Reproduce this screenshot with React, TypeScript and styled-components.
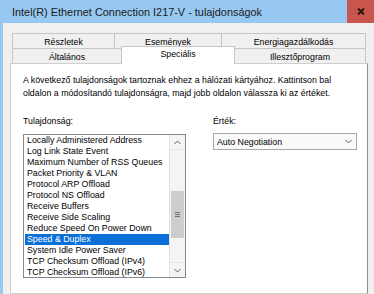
import styled, { createGlobalStyle } from 'styled-components'

const GlobalStyle = createGlobalStyle`
  html, body {
    margin: 0;
    padding: 0;
    background: #f0f0f0;
    overflow: hidden;
  }
  body {
    font-family: "Liberation Sans", Arial, sans-serif;
    color: #000;
  }
`

const Window = styled.div`
  width: 374px;
  height: 294px;
  display: flex;
  flex-direction: column;
  overflow: hidden;
`

const TitleBar = styled.header`
  height: 23px;
  flex: none;
  display: flex;
  align-items: center;
  justify-content: space-between;
  background: #97c8f1;
`

const Title = styled.h1`
  margin: 1px 0 0 12px;
  font-size: 10.9px;
  font-weight: 400;
  color: #1b1b1b;
`

const CloseButton = styled.div`
  width: 27px;
  height: 23px;
  background: #c9564c;
  display: flex;
  align-items: center;
  justify-content: center;
`

const Body = styled.div`
  flex: 1;
  display: flex;
  flex-direction: column;
  border-left: 3px solid #97c8f1;
  padding: 10px 6px 0 7px;
`

const TabStrip = styled.div`
  display: flex;
  flex-direction: column;
  margin: 0 2px;
`

const TabRow = styled.div`
  display: flex;
  height: 15px;
`

const Tab = styled.div<{ $w: number; $active?: boolean; $first?: boolean }>`
  width: ${p => p.$w}px;
  box-sizing: border-box;
  flex: none;
  border-top: 1px solid #c6c6c6;
  border-right: 1px solid #c6c6c6;
  border-left: ${p => (p.$first ? '1px solid #c6c6c6' : 'none')};
  background: #f0f0f0;
  font-size: 8.8px;
  line-height: 13px;
  text-align: center;
  padding-top: 2px;

  ${p =>
    p.$active &&
    `
    position: relative;
    z-index: 1;
    background: #fff;
    height: 18px;
    margin: -2px 0 0 -1px;
    border-left: 1px solid #c6c6c6;
    width: ${p.$w + 1}px;
    padding-top: 1px;
  `}
`

const Panel = styled.section`
  flex: 1;
  background: #fff;
  border: 1px solid #cfcfcf;
  border-right-color: #8f8f8f;
  padding: 10px 10px 0 12px;
`

const Description = styled.p`
  margin: 0 0 15px;
  font-size: 8.8px;
  line-height: 13px;
  white-space: nowrap;
`

const Columns = styled.div`
  display: grid;
  grid-template-columns: 163px 144px;
  column-gap: 27px;
  align-items: start;
`

const Field = styled.div`
  display: flex;
  flex-direction: column;
`

const Label = styled.label`
  font-size: 8.8px;
  line-height: 13px;
  margin-bottom: ${p => (p.htmlFor === 'value' ? 5 : 6)}px;
`

const ListBox = styled.div`
  height: 144px;
  box-sizing: border-box;
  border: 1px solid #828790;
  background: #fff;
  display: flex;
  overflow: hidden;
`

const Items = styled.ul`
  flex: 1;
  margin: 0;
  padding: 0 0 0 1px;
  list-style: none;
  min-width: 0;
`

const Item = styled.li<{ $selected?: boolean }>`
  height: 11px;
  line-height: 11px;
  padding-left: 2px;
  font-size: 8.8px;
  white-space: nowrap;
  background: ${p => (p.$selected ? '#0a6fd6' : 'transparent')};
  color: ${p => (p.$selected ? '#fff' : '#000')};
`

const ScrollBar = styled.div`
  width: 15px;
  flex: none;
  display: flex;
  flex-direction: column;
  background: #f4f4f4;
  border-left: 1px solid #e2e2e2;
`

const ScrollArrow = styled.div<{ $down?: boolean }>`
  height: 14px;
  flex: none;
  display: flex;
  align-items: center;
  justify-content: center;
  ${p => (p.$down ? 'border-top: 1px solid #e6e6e6;' : 'border-bottom: 1px solid #e6e6e6;')}
`

const Track = styled.div`
  flex: 1;
  padding-top: 41px;
`

const Thumb = styled.div`
  height: 47px;
  margin: 0 1px;
  background: #cdcdcd;
  display: flex;
  align-items: center;
  justify-content: center;
`

const Select = styled.div`
  height: 17px;
  box-sizing: border-box;
  border: 1px solid #a9a9a9;
  background: #f9f9f9;
  display: flex;
  align-items: center;
  justify-content: space-between;
  padding: 0 4px 0 3px;
  font-size: 8.8px;
`

const Chevron = ({ up }: { up?: boolean }) => (
  <svg width="7" height="5" viewBox="0 0 7 5">
    <polyline
      points={up ? '0.5,4 3.5,1 6.5,4' : '0.5,1 3.5,4 6.5,1'}
      fill="none"
      stroke="#606060"
      strokeWidth="1"
    />
  </svg>
)

const properties = [
  'Locally Administered Address',
  'Log Link State Event',
  'Maximum Number of RSS Queues',
  'Packet Priority & VLAN',
  'Protocol ARP Offload',
  'Protocol NS Offload',
  'Receive Buffers',
  'Receive Side Scaling',
  'Reduce Speed On Power Down',
  'Speed & Duplex',
  'System Idle Power Saver',
  'TCP Checksum Offload (IPv4)',
  'TCP Checksum Offload (IPv6)',
]

export default function App() {
  return (
    <Window>
      <GlobalStyle />
      <TitleBar>
        <Title>Intel(R) Ethernet Connection I217-V - tulajdonságok</Title>
        <CloseButton>
          <svg width="8" height="7" viewBox="0 0 8 7">
            <path d="M1 0.5 L7 6.5 M7 0.5 L1 6.5" stroke="#2a1512" strokeWidth="2" />
          </svg>
        </CloseButton>
      </TitleBar>
      <Body>
        <TabStrip>
          <TabRow>
            <Tab $w={103} $first>Részletek</Tab>
            <Tab $w={107}>Események</Tab>
            <Tab $w={144}>Energiagazdálkodás</Tab>
          </TabRow>
          <TabRow>
            <Tab $w={110} $first>Általános</Tab>
            <Tab $w={113} $active>Speciális</Tab>
            <Tab $w={131}>Illesztőprogram</Tab>
          </TabRow>
        </TabStrip>
        <Panel>
          <Description>
            A következő tulajdonságok tartoznak ehhez a hálózati kártyához. Kattintson bal
            <br />
            oldalon a módosítandó tulajdonságra, majd jobb oldalon válassza ki az értéket.
          </Description>
          <Columns>
            <Field>
              <Label htmlFor="property">Tulajdonság:</Label>
              <ListBox id="property">
                <Items>
                  {properties.map(name => (
                    <Item key={name} $selected={name === 'Speed & Duplex'}>
                      {name}
                    </Item>
                  ))}
                </Items>
                <ScrollBar>
                  <ScrollArrow>
                    <Chevron up />
                  </ScrollArrow>
                  <Track>
                    <Thumb>
                      <svg width="5" height="5" viewBox="0 0 5 5">
                        <path d="M0 0.5 H5 M0 2.5 H5 M0 4.5 H5" stroke="#707070" strokeWidth="1" />
                      </svg>
                    </Thumb>
                  </Track>
                  <ScrollArrow $down>
                    <Chevron />
                  </ScrollArrow>
                </ScrollBar>
              </ListBox>
            </Field>
            <Field>
              <Label htmlFor="value">Érték:</Label>
              <Select id="value">
                <span>Auto Negotiation</span>
                <Chevron />
              </Select>
            </Field>
          </Columns>
        </Panel>
      </Body>
    </Window>
  )
}
